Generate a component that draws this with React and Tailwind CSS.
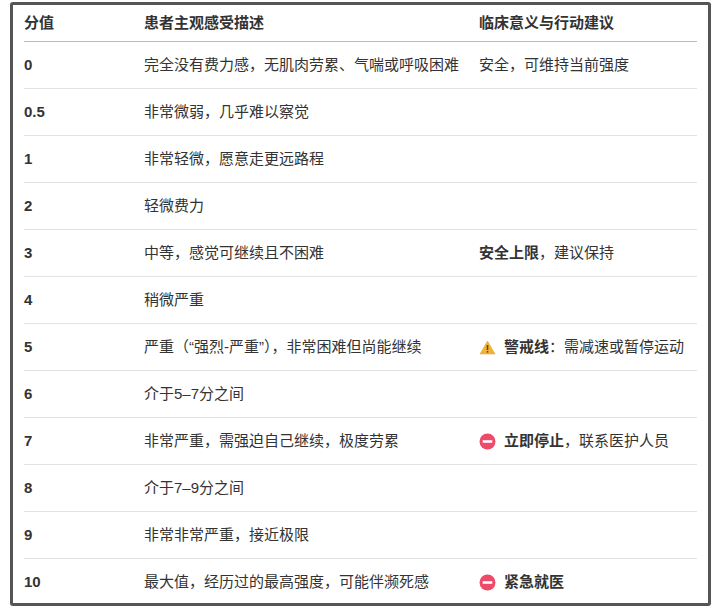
const rows = [
  ["0", "完全没有费力感，无肌肉劳累、气喘或呼吸困难", <>安全，可维持当前强度</>],
  ["0.5", "非常微弱，几乎难以察觉", null],
  ["1", "非常轻微，愿意走更远路程", null],
  ["2", "轻微费力", null],
  ["3", "中等，感觉可继续且不困难", <><b className="font-bold">安全上限</b>，建议保持</>],
  ["4", "稍微严重", null],
  ["5", "严重（“强烈-严重”），非常困难但尚能继续", <><Warn /><b className="font-bold">警戒线</b>：需减速或暂停运动</>],
  ["6", "介于5–7分之间", null],
  ["7", "非常严重，需强迫自己继续，极度劳累", <><Stop /><b className="font-bold">立即停止</b>，联系医护人员</>],
  ["8", "介于7–9分之间", null],
  ["9", "非常非常严重，接近极限", null],
  ["10", "最大值，经历过的最高强度，可能伴濒死感", <><Stop /><b className="font-bold">紧急就医</b></>],
];

function Warn() {
  return (
    <svg width="17" height="15" viewBox="0 0 16 15" className="mr-[8px] inline-block">
      <path d="M8 1 L15.5 14 H0.5 Z" fill="#f5b335" stroke="#e0a020" strokeWidth="0.5" strokeLinejoin="round" />
      <rect x="7.2" y="5" width="1.6" height="5" fill="#5a4a2a" />
      <rect x="7.2" y="11" width="1.6" height="1.6" fill="#5a4a2a" />
    </svg>
  );
}
function Stop() {
  return (
    <svg width="17" height="17" viewBox="0 0 16 16" className="mr-[8px] inline-block">
      <circle cx="8" cy="8" r="7.5" fill="#ee4a6a" />
      <rect x="3.5" y="6.8" width="9" height="2.4" fill="#fff" />
    </svg>
  );
}

export default function App() {
  return (
    <div className="w-[716px] h-[613px] bg-white" style={{ fontFamily: '"Liberation Sans","Noto Sans CJK SC",sans-serif' }}>
      <div className="ml-[10px] mt-[2px] w-[701px] h-[604px] border-[3px] border-[#555] rounded-[3px] px-[11px] overflow-hidden text-[15px] text-[#333]">
        <div className="flex h-[37px] items-center border-b border-[#bbb] font-bold">
          <div className="w-[120px]">分值</div>
          <div className="w-[335px]">患者主观感受描述</div>
          <div>临床意义与行动建议</div>
        </div>
        {rows.map(([a, b, c]) => (
          <div key={a} className="flex h-[47px] items-center border-b border-[#e2e2e2]">
            <div className="w-[120px] font-bold">{a}</div>
            <div className="w-[335px]">{b}</div>
            <div className="flex items-center">{c}</div>
          </div>
        ))}
      </div>
    </div>
  );
}
